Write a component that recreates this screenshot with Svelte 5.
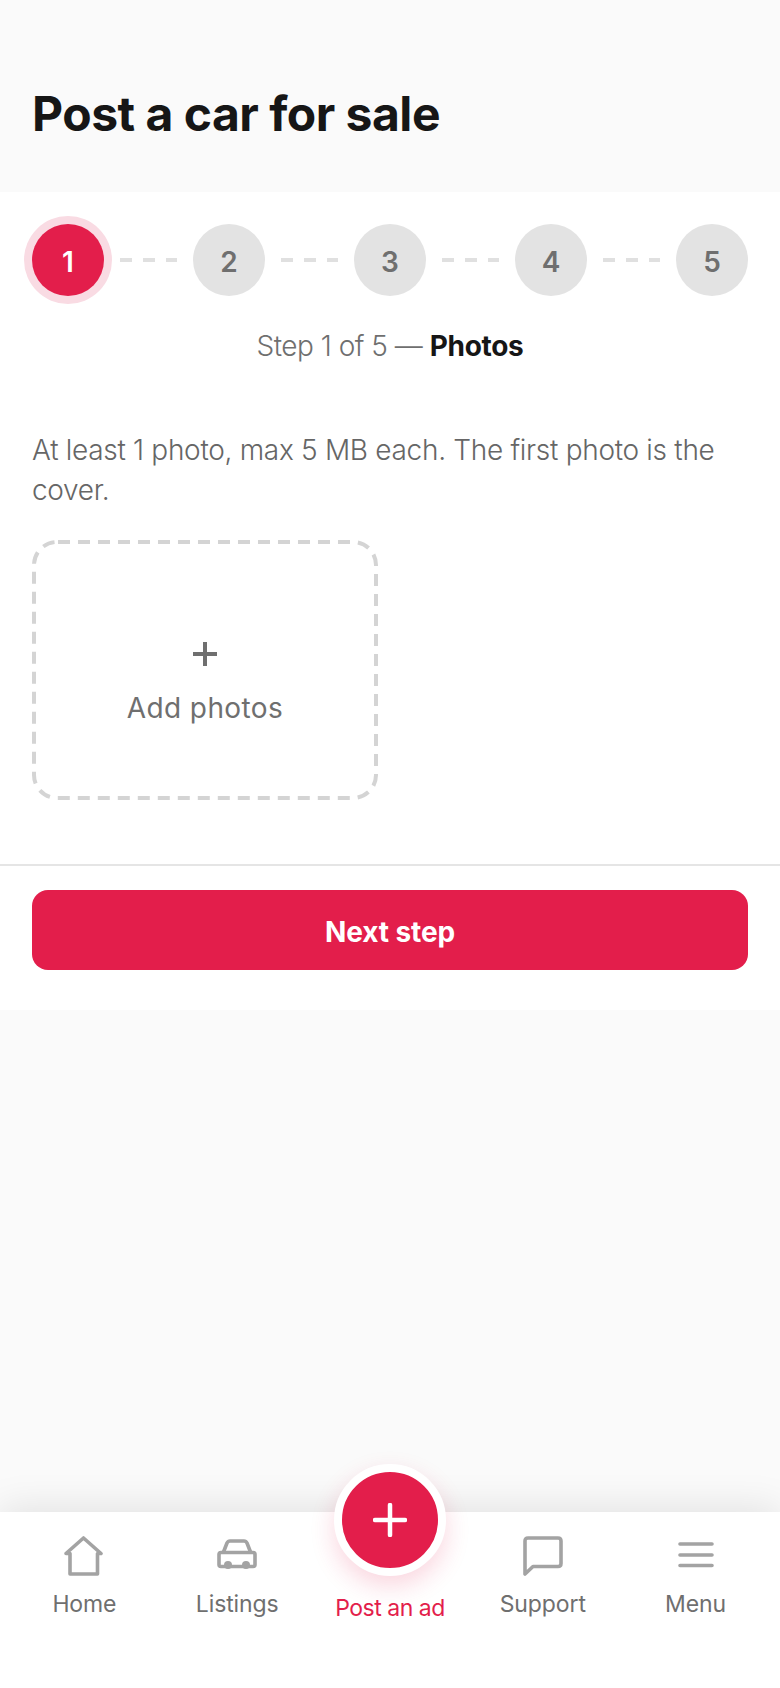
<script lang="ts">
  const steps = [1, 2, 3, 4, 5];
</script>

<div class="page">
  <header class="head">
    <h1>Post a car for sale</h1>
  </header>

  <section class="card">
    <div class="stepper">
      {#each steps as n, i}
        {#if i > 0}<span class="dash"></span>{/if}
        <span class="dot" class:active={n === 1}>{n}</span>
      {/each}
    </div>
    <p class="step-label">Step 1 of 5 — <b>Photos</b></p>
    <p class="hint">At least 1 photo, max 5 MB each. The first photo is the cover.</p>
    <div class="drop">
      <svg class="outline" viewBox="0 0 346 260" width="346" height="260" fill="none">
        <rect x="2" y="2" width="342" height="256" rx="23" stroke="#d4d4d4" stroke-width="4" stroke-dasharray="12 8" stroke-dashoffset="-1" />
      </svg>
      <svg class="plus" viewBox="0 0 26 26" width="26" height="26"><path d="M13 1v24M1 13h24" stroke="#6f6f6f" stroke-width="4" fill="none" /></svg>
      <span>Add photos</span>
    </div>
  </section>

  <div class="footer">
    <button class="next">Next step</button>
  </div>

  <div class="spacer"></div>

  <nav class="nav">
    <div class="item">
      <svg viewBox="0 0 40 40" width="40" height="40" fill="none" stroke="#a3a3a3" stroke-width="3.600" stroke-linejoin="round" stroke-linecap="round">
        <path d="M2 17.500 19.500 2 37 17.500H33.500V38H6V17.500Z" />
      </svg>
      <span>Home</span>
    </div>
    <div class="item">
      <svg viewBox="0 0 40 40" width="40" height="40" fill="none" stroke="#a3a3a3" stroke-width="3.600" stroke-linejoin="round" stroke-linecap="round">
        <path d="M6.500 16 10 7Q11 5 13 5H27Q29 5 30 7L33.500 16" />
        <path d="M4 16.500H36Q38 16.500 38 18.500V28.500Q38 30.500 36 30.500H4Q2 30.500 2 28.500V18.500Q2 16.500 4 16.500Z" />
        <circle cx="11" cy="29" r="4" fill="#a3a3a3" stroke="none" />
        <circle cx="29" cy="29" r="4" fill="#a3a3a3" stroke="none" />
      </svg>
      <span>Listings</span>
    </div>
    <div class="item post">
      <div class="fab">
        <svg viewBox="0 0 34 34" width="34" height="34"><path d="M17 2v30M2 17h30" stroke="#fff" stroke-width="4.500" stroke-linecap="round" fill="none" /></svg>
      </div>
      <span>Post an ad</span>
    </div>
    <div class="item">
      <svg viewBox="0 0 40 40" width="40" height="40" fill="none" stroke="#a3a3a3" stroke-width="3.600" stroke-linejoin="round" stroke-linecap="round">
        <path d="M5 2H35Q38 2 38 5V27.500Q38 30.500 35 30.500H10L2 38V5Q2 2 5 2Z" />
      </svg>
      <span>Support</span>
    </div>
    <div class="item">
      <svg viewBox="0 0 36 40" width="36" height="40" fill="none" stroke="#a3a3a3" stroke-width="3.600" stroke-linecap="round">
        <path d="M2 8H34M2 19H34M2 29.500H34" />
      </svg>
      <span>Menu</span>
    </div>
  </nav>
</div>

<style>
  :global(body) {
    margin: 0;
    background: #fafafa;
  }

  .page {
    display: flex;
    flex-direction: column;
    height: 1688px;
    font-family: Inter, "Liberation Sans", sans-serif;
    color: #111;
    overflow: hidden;
  }

  .head {
    height: 192px;
    box-sizing: border-box;
    padding: 85px 32px 0;
    background: #fafafa;
  }

  h1 {
    margin: 0;
    font-size: 48px;
    line-height: 58px;
    font-weight: 700;
    letter-spacing: -0.5px;
    color: #161616;
  }

  .card {
    background: #fff;
    padding: 32px 32px 64px;
    border-bottom: 2px solid #e5e5e5;
  }

  .stepper {
    display: flex;
    align-items: center;
  }

  .dash {
    flex: 1;
    height: 4px;
    margin: 0 16px;
    background: repeating-linear-gradient(90deg, #e0e0e0 0 12px, transparent 12px 23px);
  }

  .dot {
    width: 72px;
    height: 72px;
    box-sizing: border-box;
    padding-top: 3px;
    flex: none;
    border-radius: 50%;
    display: flex;
    align-items: center;
    justify-content: center;
    background: #e3e3e3;
    color: #6f6f6f;
    font-size: 28px;
    font-weight: 600;
  }

  .dot.active {
    background: #e31e4b;
    color: #fff;
    box-shadow: 0 0 0 8px #f9dbe3;
  }

  .step-label {
    margin: 28px 0 0;
    text-align: center;
    font-size: 28px;
    line-height: 44px;
    color: #6f6f6f;
    font-weight: 300;
    letter-spacing: -0.5px;
  }

  .step-label b {
    color: #161616;
    font-weight: 700;
    letter-spacing: -0.3px;
  }

  .hint {
    margin: 62px 0 0;
    font-size: 28px;
    line-height: 40px;
    color: #666;
    font-weight: 300;
    letter-spacing: -0.3px;
  }

  .drop {
    position: relative;
    margin-top: 30px;
    width: 346px;
    height: 260px;
    box-sizing: border-box;
    display: flex;
    flex-direction: column;
    align-items: center;
    justify-content: center;
    gap: 24px;
    font-size: 28px;
    color: #6f6f6f;
    letter-spacing: 0.4px;
  }

  .outline {
    position: absolute;
    inset: 0;
  }

  .plus {
    margin-top: 25px;
  }

  .footer {
    background: #fff;
    padding: 24px 32px 40px;
  }

  .next {
    display: block;
    width: 100%;
    height: 80px;
    padding: 4px 0 0;
    border: 0;
    border-radius: 16px;
    background: #e31e4b;
    color: #fff;
    font: 700 28px Inter, "Liberation Sans", sans-serif;
    letter-spacing: -0.1px;
  }

  .spacer {
    flex: 1;
  }

  .nav {
    position: relative;
    height: 176px;
    flex: none;
    background: #fff;
    display: grid;
    grid-template-columns: repeat(5, 1fr);
    padding: 0 8px;
    box-sizing: border-box;
    box-shadow: 0 -4px 36px rgba(0, 0, 0, 0.1);
  }

  .item {
    display: flex;
    flex-direction: column;
    align-items: center;
    padding-top: 24px;
    font-size: 23px;
    color: #6f6f6f;
    letter-spacing: -0.1px;
  }

  .item svg {
    display: block;
  }

  .item > span {
    margin-top: 12px;
    line-height: 32px;
    white-space: nowrap;
  }

  .post {
    color: #e31e4b;
  }

  .post > span {
    margin-top: 56px;
    letter-spacing: -0.5px;
  }

  .fab {
    position: absolute;
    top: -48px;
    left: 50%;
    transform: translateX(-50%);
    width: 96px;
    height: 96px;
    border-radius: 50%;
    background: #e31e4b;
    border: 8px solid #fff;
    display: flex;
    align-items: center;
    justify-content: center;
    box-shadow: 0 10px 24px rgba(227, 30, 75, 0.18);
  }
</style>
